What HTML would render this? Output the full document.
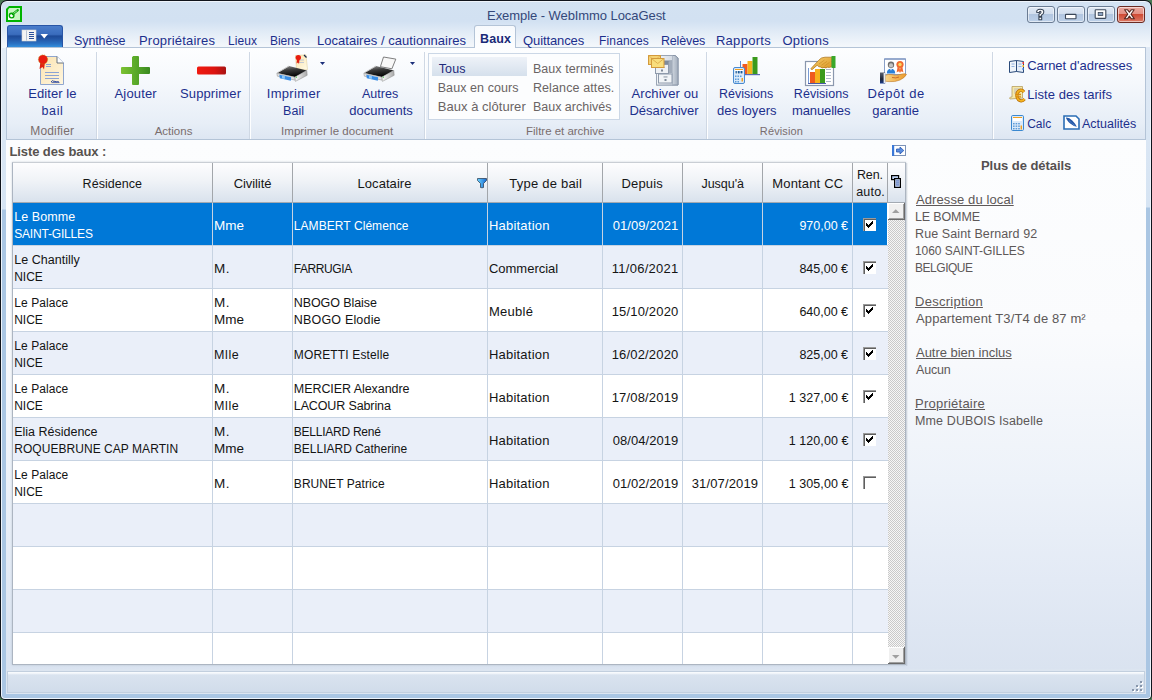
<!DOCTYPE html>
<html><head><meta charset="utf-8">
<style>
*{box-sizing:border-box;margin:0;padding:0}
html,body{width:1152px;height:700px;overflow:hidden;background:#4b7a55}
body{font-family:"Liberation Sans",sans-serif;font-size:12px;position:relative}
.a{position:absolute}
.t{position:absolute;white-space:nowrap;line-height:20px}
svg{position:absolute;overflow:visible}
.sep{position:absolute;top:52px;width:2px;height:87px;border-left:1px solid #cfd8e4;border-right:1px solid #fdfeff}
.wb{position:absolute;top:6px;height:17px;border:1px solid #6a7c93;border-radius:3px;background:linear-gradient(#dfe8f4 0,#d3dfee 45%,#b2c6e0 50%,#bdd1e9 100%);box-shadow:inset 0 0 0 1px rgba(255,255,255,.55)}
.hs{position:absolute;top:163px;width:1px;height:39px;background:#a2a6ab}
.vl{position:absolute;top:203px;width:1px;height:461px;background:#c7d3e2}
.hl{position:absolute;left:13px;width:875px;height:1px;background:#c7d3e2}
.rowb{position:absolute;left:13px;width:875px;height:42px;background:#eaeff9}
.cb{position:absolute;left:863px;width:13px;height:13px;background:#fff;border-top:1px solid #9a9a9a;border-left:1px solid #9a9a9a;box-shadow:inset 1px 1px 0 #5f5f5f}
</style></head><body>
<!-- window frame -->
<div class="a" style="left:0;top:0;width:1152px;height:700px;border-radius:7px 7px 5px 5px;background:#10141c"></div>
<div class="a" style="left:1px;top:1px;width:1150px;height:698px;border-radius:6px 6px 4px 4px;background:#eef4fb"></div>
<div class="a" style="left:2px;top:2px;width:1148px;height:696px;border-radius:5px 5px 3px 3px;background:linear-gradient(#d3e2f2 0,#e2ecf6 45px,#dae7f4 120px,#d6e4f3 207px,#aac6e3 208px)"></div>
<div class="a" style="left:2px;top:2px;width:1148px;height:46px;border-radius:4px 4px 0 0;background:linear-gradient(#d3e2f2 0px,#d2e1f2 19px,#e4edf7 32px,#f3f7fb 44px)"></div>
<div class="a" style="left:1146px;top:47px;width:4px;height:650px;background:linear-gradient(#dfe9f5 0,#d6e4f3 160px,#aac6e3 161px)"></div>

<!-- window icon -->
<svg style="left:6px;top:6px" width="16" height="16" viewBox="0 0 16 16">
<path d="M3 0 H16 V16 H0 V3 Z" fill="#00b400"/>
<path d="M3.5 2 H14 V14 H2 V3.5 Z" fill="#c8f6c2"/>
<path d="M2 8 L2 14 L8 14 Z" fill="#fff" opacity=".8"/>
<circle cx="5.6" cy="9.6" r="2.3" fill="#fff" stroke="#00a400" stroke-width="1.4"/>
<path d="M6.8 8.2 L11.8 4.2" stroke="#00a400" stroke-width="2.2" stroke-linecap="round"/>
<path d="M7.6 7.4 L11.2 4.6" stroke="#e8ffe8" stroke-width=".7"/>
</svg>

<!-- window buttons -->
<div class="wb" style="left:1027px;width:28px"></div>
<div class="wb" style="left:1057px;width:28px"></div>
<div class="wb" style="left:1087px;width:28px"></div>
<div class="wb" style="left:1117px;width:28px;border-color:#6b2a22;background:linear-gradient(#eaa89e 0,#e39084 45%,#cf4b35 50%,#dc7a66 100%)"></div>
<svg style="left:1027px;top:6px" width="118" height="17" viewBox="0 0 118 17">
<g stroke="#3b4758" stroke-width="1.1" fill="#fff" stroke-linejoin="round">
<path d="M9.6 6.3 Q9.6 3.3 13.2 3.3 Q16.8 3.3 16.8 6 Q16.8 8 14.6 9 L14.6 10.4 L11.9 10.4 L11.9 8.2 Q14 7.4 14 6.3 Q14 5.4 13.2 5.4 Q12.4 5.4 12.3 6.6 Z"/>
<rect x="11.9" y="11.2" width="2.8" height="2.6"/>
<rect x="38.5" y="8.4" width="10.5" height="4.4" rx=".6"/>
<rect x="68.2" y="3.8" width="10.6" height="8.6" rx=".6"/>
</g>
<rect x="71.2" y="6.5" width="4.6" height="3" fill="#8aa2c2" stroke="#3b4758" stroke-width=".8"/>
<path d="M97.6 3.8 L100.6 3.8 L102.4 6.2 L104.2 3.8 L107.2 3.8 L104 8.2 L107.4 12.8 L104.4 12.8 L102.4 10.2 L100.4 12.8 L97.4 12.8 L100.8 8.2 Z" fill="#fff" stroke="#5a2a22" stroke-width="1.1" stroke-linejoin="round"/>
</svg>

<!-- app button -->
<div class="a" style="left:7px;top:25px;width:56px;height:22px;border:1px solid #2855a6;border-bottom:none;border-radius:3px 3px 0 0;background:linear-gradient(#4a7dcb 0,#3a6cbd 40%,#1d4a98 48%,#2456a5 62%,#2b73c4 85%,#3590dc 100%)"></div>
<svg style="left:22px;top:30px" width="27" height="11" viewBox="0 0 27 11">
<rect x="0" y="0" width="14" height="11" fill="#f4f4f4" stroke="#d6d6d6" stroke-width=".6"/>
<rect x="4" y="0.5" width="1" height="10" fill="#b8c4d4"/>
<rect x="7" y="2" width="5" height="1" fill="#2a4f9a"/><rect x="7" y="4" width="5" height="1" fill="#2a4f9a"/>
<rect x="7" y="6" width="5" height="1" fill="#2a4f9a"/><rect x="7" y="8" width="5" height="1" fill="#2a4f9a"/>
<path d="M18.5 4 L26 4 L22.25 8.5 Z" fill="#fff"/>
</svg>

<!-- ribbon -->
<div class="a" style="left:6px;top:47px;width:1140px;height:93px;border:1px solid #b4c4d7;background:linear-gradient(#fdfeff 0px,#f5f8fc 35px,#e7eef7 75px,#dde6f2 92px)"></div>
<!-- active tab -->
<div class="a" style="left:474px;top:25px;width:42px;height:23px;border:1px solid #b4c4d7;border-bottom:none;border-radius:3px 3px 0 0;background:linear-gradient(#f7fafd,#fdfeff)"></div>
<div class="sep" style="left:96px"></div>
<div class="sep" style="left:249px"></div>
<div class="sep" style="left:424px"></div>
<div class="sep" style="left:706px"></div>
<div class="sep" style="left:992px"></div>
<!-- filter box -->
<div class="a" style="left:428px;top:53px;width:192px;height:67px;border:1px solid #cbd7e6;background:#fcfdfe"></div>
<div class="a" style="left:432px;top:57px;width:95px;height:19px;background:linear-gradient(#eef2f8,#d5e0ec)"></div>

<!-- Editer le bail: certificate -->
<svg style="left:40px;top:55px" width="25" height="30" viewBox="0 0 25 30">
<defs><linearGradient id="gdoc" x1="0" y1="0" x2="1" y2="1"><stop offset="0" stop-color="#fbe3b0"/><stop offset="1" stop-color="#fff6df"/></linearGradient></defs>
<path d="M0.5 1.5 L17 1.5 L23.5 8 L23.5 29.5 L0.5 29.5 Z" fill="url(#gdoc)" stroke="#8fa6cf" stroke-width="1"/>
<path d="M17 1.5 L17 8 L23.5 8" fill="#fff" stroke="#5a6472" stroke-width=".9"/>
<g stroke="#8ca4d4" stroke-width="1"><path d="M6 9.5 H11"/><path d="M6 11.5 H11"/><path d="M5 17.5 H19"/><path d="M5 20.5 H19"/><path d="M5 23.5 H19"/></g>
<path d="M11 27 Q12.5 24.5 14 26.5 Q15 25.5 16 27 Q17 26 19 27" stroke="#2f4aa0" stroke-width="1" fill="none"/>
<path d="M11.5 27.6 H19.5" stroke="#2f4aa0" stroke-width=".8"/>
<path d="M0.5 7 L-0.5 14 L2.5 12 L4 14.5 L5 7 Z" fill="#e02010"/>
<circle cx="3" cy="4.5" r="4.6" fill="#e81c10"/>
<circle cx="3" cy="4.5" r="4.6" fill="none" stroke="#b8860b" stroke-width=".8" stroke-dasharray="1 1.2"/>
</svg>
<!-- Ajouter: plus -->
<svg style="left:121px;top:56px" width="30" height="30" viewBox="0 0 30 30">
<defs><linearGradient id="gplus" x1="0" y1="0" x2="1" y2="0"><stop offset="0" stop-color="#7cc232"/><stop offset=".5" stop-color="#5aaa2a"/><stop offset="1" stop-color="#3a8a20"/></linearGradient></defs>
<path d="M12 0.8 Q11 0 12 0 L17 0 Q18 0 18 1 L18 11 L28 11 Q29 11 29 12 L29 17 Q29 18 28 18 L18 18 L18 28 Q18 29 17 29 L12 29 Q11 29 11 28 L11 18 L1 18 Q0 18 0 17 L0 12 Q0 11 1 11 L11 11 L11 1 Z" fill="url(#gplus)"/>
</svg>
<!-- Supprimer: minus -->
<svg style="left:197px;top:66px" width="30" height="9" viewBox="0 0 30 9">
<defs><linearGradient id="gmin" x1="0" y1="0" x2="1" y2="0"><stop offset="0" stop-color="#f01a10"/><stop offset=".6" stop-color="#dc1410"/><stop offset="1" stop-color="#a81212"/></linearGradient></defs>
<rect x="0" y="0.5" width="29" height="8" rx="1.5" fill="url(#gmin)"/>
</svg>
<!-- printer 1 -->
<svg style="left:276px;top:54px" width="50" height="28" viewBox="0 0 50 28">
<defs>
<linearGradient id="gpt" x1="0" y1="0" x2="0.3" y2="1"><stop offset="0" stop-color="#9a9a9a"/><stop offset=".45" stop-color="#3a3a3a"/><stop offset="1" stop-color="#050505"/></linearGradient>
<linearGradient id="gps" x1="0" y1="0" x2="1" y2="0"><stop offset="0" stop-color="#fafafa"/><stop offset="1" stop-color="#a8a8a8"/></linearGradient>
<linearGradient id="gcert" x1="0" y1="0" x2="1" y2="1"><stop offset="0" stop-color="#fbe2a8"/><stop offset="1" stop-color="#fffbe8"/></linearGradient>
</defs>
<path d="M19.5 1.5 L30 0.8 L31.5 15.5 L20.5 16 Z" fill="url(#gcert)" stroke="#e0d0a0" stroke-width=".6"/>
<path d="M28 1 L30.5 3.5" stroke="#1a2a4a" stroke-width="1.2"/>
<path d="M23 6 H28 M23 8.5 H28" stroke="#a8b8d8" stroke-width=".7"/>
<path d="M21 5 L20.5 9.5 L22 8.5 L23 10 L23.5 5.5 Z" fill="#e02010"/>
<circle cx="22.3" cy="3.6" r="2.7" fill="#e81c10"/>
<path d="M1.2 18.9 L13 12 L30.8 16.4 L19 23 Z" fill="url(#gpt)"/>
<path d="M1.2 18.9 L13 12" stroke="#c8c8c8" stroke-width="1"/>
<path d="M0.8 19.3 L19 23.2 L19.3 26.2 L1.4 22.2 Z" fill="#e2e2e2" stroke="#8a8a8a" stroke-width=".5"/>
<path d="M3.3 20.8 L15.2 23.3 L14.8 26.8 L3.8 24.2 Z" fill="#3a8ee6"/>
<path d="M6 21.6 L9 22.3 L8.7 25 L6 24.4 Z" fill="#8ec8f8"/>
<path d="M19 23 L30.8 16.4 L31.2 21.3 L19.4 27.4 Z" fill="url(#gps)" stroke="#8a8a8a" stroke-width=".5"/>
<rect x="19.8" y="22.6" width="1.2" height="1.2" fill="#5ac85a"/>
<path d="M44 8 L49 8 L46.5 11 Z" fill="#1b2f7a"/>
</svg>
<!-- printer 2 -->
<svg style="left:363px;top:54px" width="53" height="28" viewBox="0 0 53 28">
<path d="M20.5 3 L32.8 5.1 L28.9 14.8 L17.4 12.7 Z" fill="#f8f8f8" stroke="#707070" stroke-width=".9"/>
<path d="M1.2 18.9 L13 12 L30.8 16.4 L19 23 Z" fill="url(#gpt)"/>
<path d="M1.2 18.9 L13 12" stroke="#c8c8c8" stroke-width="1"/>
<path d="M0.8 19.3 L19 23.2 L19.3 26.2 L1.4 22.2 Z" fill="#e2e2e2" stroke="#8a8a8a" stroke-width=".5"/>
<path d="M3.3 20.8 L15.2 23.3 L14.8 26.8 L3.8 24.2 Z" fill="#3a8ee6"/>
<path d="M6 21.6 L9 22.3 L8.7 25 L6 24.4 Z" fill="#8ec8f8"/>
<path d="M19 23 L30.8 16.4 L31.2 21.3 L19.4 27.4 Z" fill="url(#gps)" stroke="#8a8a8a" stroke-width=".5"/>
<rect x="19.8" y="22.6" width="1.2" height="1.2" fill="#5ac85a"/>
<path d="M47 8 L52 8 L49.5 11 Z" fill="#1b2f7a"/>
</svg>
<!-- archive -->
<svg style="left:648px;top:55px" width="31" height="31" viewBox="0 0 31 31">
<defs><linearGradient id="gcabf" x1="0" y1="0" x2="1" y2="0"><stop offset="0" stop-color="#f4f6f9"/><stop offset="1" stop-color="#d4dae3"/></linearGradient>
<linearGradient id="gcabs" x1="0" y1="0" x2="1" y2="0"><stop offset="0" stop-color="#ccd3dc"/><stop offset="1" stop-color="#a3aebd"/></linearGradient></defs>
<path d="M8.5 0.5 L27 0.5 L30 3 L30 30 L8.5 30 Z" fill="url(#gcabs)" stroke="#8a96a8" stroke-width="1"/>
<rect x="8.5" y="0.5" width="16" height="29.5" fill="url(#gcabf)" stroke="#9aa5b5" stroke-width="1"/>
<path d="M24.5 0.5 L27 0.5 L30 3 L30 30 L24.5 30" fill="url(#gcabs)" stroke="#8a96a8" stroke-width="1"/>
<rect x="16" y="5.5" width="8" height="5" fill="#7f8b9c"/>
<rect x="10.5" y="19" width="13.5" height="9" fill="#f1f4f7" stroke="#8e9aab" stroke-width="1"/>
<rect x="15.5" y="21.5" width="4" height=".9" fill="#7d8898"/><rect x="16.5" y="24" width="2" height="2" fill="#7d8898"/>
<path d="M20.6 6.5 L24 5.5 L24 18 L20.6 18.5 Z" fill="#a3adbb"/>
<rect x="7.5" y="9.5" width="13" height="9" fill="#eef1f5" stroke="#8e9aab" stroke-width="1"/>
<rect x="11.5" y="12" width="5" height=".9" fill="#7d8898"/><rect x="13" y="14.5" width="2" height="2" fill="#7d8898"/>
<rect x="0.5" y="0.5" width="12" height="9" fill="#f5d274" stroke="#d39a3c" stroke-width="1"/>
<path d="M0.5 0.5 L6.5 5.5 L12.5 0.5" fill="none" stroke="#e0b050" stroke-width=".7"/>
<rect x="3.5" y="3.5" width="12.5" height="9" fill="#f9de7c" stroke="#d39a3c" stroke-width="1"/>
<path d="M3.5 3.5 L9.75 8.5 L16 3.5" fill="none" stroke="#d9a444" stroke-width=".8"/>
</svg>
<!-- revisions des loyers -->
<svg style="left:733px;top:56px" width="27" height="28" viewBox="0 0 27 28">
<rect x="9.5" y="8" width="5" height="10" fill="#f05a1e"/>
<rect x="14.5" y="5" width="5" height="13" fill="#f6b21c"/>
<rect x="19.5" y="1" width="5" height="17" fill="#3a9a1c"/>
<rect x="9" y="18" width="18" height="1.2" fill="#5a6ab0"/>
<rect x="7" y="5" width="1" height="7" fill="#5a8ad0"/>
<rect x="0.5" y="11.5" width="11" height="16" rx="1.5" fill="#dbeafa" stroke="#4a8ad0" stroke-width="1"/>
<rect x="2" y="13" width="8" height="5" fill="#fff"/>
<rect x="2" y="13" width="8" height="1" fill="#f0a020"/>
<g fill="#1a5a9a"><rect x="2.5" y="15" width="1.3" height="2.5"/><rect x="4.7" y="15" width="2" height="2.5"/><rect x="7.5" y="15" width="2" height="2.5"/></g>
<g fill="#5a9ad8"><rect x="2" y="19.5" width="1.5" height="1.5"/><rect x="4.5" y="19.5" width="1.5" height="1.5"/><rect x="7" y="19.5" width="1.5" height="1.5"/>
<rect x="2" y="22.5" width="1.5" height="1.5"/><rect x="4.5" y="22.5" width="1.5" height="1.5"/><rect x="2" y="25" width="1.5" height="1.5"/><rect x="4.5" y="25" width="1.5" height="1.5"/></g>
<rect x="8.5" y="22" width="1.5" height="3.5" fill="#f0a020"/>
</svg>
<!-- revisions manuelles -->
<svg style="left:805px;top:56px" width="31" height="30" viewBox="0 0 31 30">
<rect x="0.5" y="5.5" width="28" height="24" fill="#fff" stroke="#8a97ad" stroke-width="1.2"/>
<rect x="3" y="12" width="0.9" height="15" fill="#6a90d0"/>
<rect x="5" y="16" width="5" height="11" fill="#f05a1e"/>
<rect x="10" y="13" width="5" height="14" fill="#f6b21c"/>
<rect x="15" y="13" width="5" height="14" fill="#3a9a1c"/>
<rect x="3" y="27" width="18" height="1" fill="#4a5aa8"/>
<g fill="#9aa8bd"><rect x="21" y="13" width="5" height=".8"/><rect x="21" y="16" width="5" height=".8"/><rect x="21" y="19" width="5" height=".8"/><rect x="21" y="22" width="5" height=".8"/><rect x="21" y="25" width="5" height=".8"/></g>
<defs><linearGradient id="ghand2" x1="0" y1="0" x2="1" y2="1"><stop offset="0" stop-color="#f8d070"/><stop offset="1" stop-color="#d89420"/></linearGradient></defs>
<path d="M6 12.5 L13.5 4.5 Q16 1.2 20 1.2 L26.8 1.2 L26.8 10.5 Q24.5 12.2 22.5 11.2 Q21 12.6 19 11.4 Q17.2 12.6 15.5 11 Q13.2 11.2 12.2 9.2 L7.4 13.4 Q5.8 13.8 6 12.5 Z" fill="url(#ghand2)" stroke="#a87018" stroke-width=".7"/>
<path d="M14 8 L19.5 4 M16.5 9.2 L22 5.4 M19.5 10 L24.5 6.4" stroke="#c88a20" stroke-width=".6"/>
<rect x="26.5" y="0" width="4" height="12" fill="#3aa82a"/>
</svg>
<!-- depot de garantie -->
<svg style="left:880px;top:58px" width="27" height="26" viewBox="0 0 27 26">
<defs><linearGradient id="ghand" x1="0" y1="0" x2="1" y2="0"><stop offset="0" stop-color="#f8d68a"/><stop offset=".6" stop-color="#f2b04a"/><stop offset="1" stop-color="#e89a30"/></linearGradient>
<linearGradient id="gcuff" x1="0" y1="0" x2="0" y2="1"><stop offset="0" stop-color="#5a6270"/><stop offset=".6" stop-color="#1e2638"/><stop offset="1" stop-color="#1a3a8a"/></linearGradient></defs>
<rect x="4.5" y="1" width="21" height="15.5" fill="#fff" stroke="#8aa0c8" stroke-width="1"/>
<path d="M4.5 1 H25.5" stroke="#6a86b8" stroke-width="1"/>
<circle cx="11" cy="6.8" r="3.2" fill="#6e6e6e"/>
<circle cx="11" cy="7.4" r="2.1" fill="#c4c4c4"/>
<path d="M6.8 15.5 Q6.8 10.8 11 10.8 Q15.2 10.8 15.2 15.5 Z" fill="#2a80d8"/>
<path d="M10.2 11 L11 12.8 L11.8 11 Z" fill="#fff"/>
<path d="M17.6 9 L16.6 14.5 L18.4 13.2 L19.6 14.8 L20.4 9.8 Z M22.4 9 L23.4 14.5 L21.6 13.2 L20.4 14.8 L19.6 9.8 Z" fill="#f06a30"/>
<circle cx="20" cy="6.5" r="3.6" fill="#f26a2e"/>
<circle cx="20" cy="6.5" r="1.7" fill="#f8d860"/>
<path d="M5 17.5 Q8 15.8 12 16.6 L16 17.2 Q19 16.8 22 16 Q25.5 15.2 26.5 16.4 Q25 19.5 20 22 Q15 24.2 9 23.6 L5 23.2 Z" fill="url(#ghand)" stroke="#c07a28" stroke-width=".6"/>
<path d="M12 19.5 Q16 20.5 19 19" stroke="#c05a20" stroke-width=".8" fill="none"/>
<rect x="0" y="14.5" width="5.2" height="11" fill="url(#gcuff)"/>
<rect x="3.6" y="15" width="1.8" height="10" fill="#e6eaf0"/>
</svg>
<!-- carnet d'adresses -->
<svg style="left:1009px;top:60px" width="16" height="13" viewBox="0 0 16 13">
<path d="M0.5 1.5 L7.5 0.5 L7.5 11.5 L0.5 12.5 Z" fill="#eef4fb" stroke="#2a4a7a" stroke-width="1"/>
<path d="M7.5 0.5 L14.5 1.5 L14.5 12.5 L7.5 11.5 Z" fill="#e6eef8" stroke="#2a4a7a" stroke-width="1"/>
<g stroke="#7aa0d8" stroke-width=".8"><path d="M2.5 4 H5.5"/><path d="M2.5 6.5 H5.5"/><path d="M9.5 4 H12.5"/><path d="M9.5 6.5 H12.5"/></g>
<rect x="13.5" y="2" width="1.5" height="2" fill="#e83030"/><rect x="13.5" y="5" width="1.5" height="2" fill="#f0b020"/><rect x="13.5" y="8" width="1.5" height="2" fill="#3070d0"/>
</svg>
<!-- liste des tarifs -->
<svg style="left:1009px;top:86px" width="16" height="16" viewBox="0 0 16 16">
<path d="M3 0.5 L13.5 0.5 L13.5 12 L1 13 Q0 12 1.5 11 L3 11 Z" fill="#f5e8a8" stroke="#b8a060" stroke-width=".8"/>
<g stroke="#a8a8c8" stroke-width=".7"><path d="M5 3 H12"/><path d="M5 5 H8"/><path d="M5 7 H8"/></g>
<path d="M15 6 Q13 3.5 10.5 4.5 Q7.5 6 8 10 Q8.5 14.5 12 14.8 Q14 15 15.5 13" fill="none" stroke="#b87008" stroke-width="3.2"/><path d="M15 6 Q13 3.5 10.5 4.5 Q7.5 6 8 10 Q8.5 14.5 12 14.8 Q14 15 15.5 13" fill="none" stroke="#f6b420" stroke-width="1.8"/>
<path d="M6.5 8.5 H12 M6.5 10.8 H12" stroke="#d88a10" stroke-width="1.3"/>
</svg>
<!-- calc -->
<svg style="left:1011px;top:115px" width="13" height="16" viewBox="0 0 13 16">
<rect x="0.5" y="0.5" width="12" height="15" rx="1.2" fill="#dbeafa" stroke="#3a88d0" stroke-width="1"/>
<rect x="2" y="2" width="9" height="4" fill="#fff"/><rect x="2" y="2" width="9" height="1" fill="#f0a020"/>
<g fill="#5a9ad8"><rect x="2" y="8" width="1.6" height="1.4"/><rect x="4.6" y="8" width="1.6" height="1.4"/><rect x="7.2" y="8" width="1.6" height="1.4"/>
<rect x="2" y="10.5" width="1.6" height="1.4"/><rect x="4.6" y="10.5" width="1.6" height="1.4"/><rect x="7.2" y="10.5" width="1.6" height="1.4"/>
<rect x="2" y="13" width="1.6" height="1.4"/><rect x="4.6" y="13" width="1.6" height="1.4"/><rect x="7.2" y="13" width="1.6" height="1.4"/></g>
<rect x="9.6" y="10.5" width="1.4" height="4" fill="#f0a020"/>
</svg>
<!-- actualites -->
<svg style="left:1063px;top:115px" width="17" height="15" viewBox="0 0 17 15">
<path d="M1 1 L13 1 L16 4 L16 14 L1 14 Z" fill="#fff" stroke="#2a6db5" stroke-width="1.6"/>
<path d="M3 2.5 Q6 2.2 9.5 5.8 Q12.8 9.2 13.8 11.8 Q11 11.8 7.2 8.6 Q3.4 5.2 3 2.5 Z" fill="#2458a8"/><path d="M6 5.5 L12.5 11.2" stroke="#8ab4e8" stroke-width=".6" stroke-dasharray="1 .8"/>
</svg>


<!-- content -->
<div class="a" style="left:6px;top:140px;width:1140px;height:530px;background:linear-gradient(#fcfdfe 0px,#fafbfd 190px,#edf2f9 340px,#e3eaf5 440px,#dae3f0 530px)"></div>
<div class="a" style="left:906px;top:163px;width:2px;height:503px;background:linear-gradient(90deg,rgba(150,160,175,.35),rgba(150,160,175,0))"></div>

<!-- table -->
<div class="a" style="left:12px;top:162px;width:894px;height:503px;border:1px solid #acb5c1;border-top-color:#c9ced4;background:#fff;box-shadow:0 0 2px rgba(110,125,145,.35)"></div>
<div class="a" style="left:13px;top:163px;width:892px;height:39px;background:linear-gradient(#fdfdfe 0,#f0f3f7 45%,#d9e2ed 100%)"></div>
<div class="a" style="left:13px;top:202px;width:892px;height:1px;background:#a3aab2"></div>
<div class="hs" style="left:212px"></div><div class="hs" style="left:292px"></div><div class="hs" style="left:487px"></div>
<div class="hs" style="left:602px"></div><div class="hs" style="left:682px"></div><div class="hs" style="left:762px"></div>
<div class="hs" style="left:852px"></div><div class="hs" style="left:887px"></div>
<!-- row backgrounds -->
<div class="rowb" style="top:246px"></div>
<div class="rowb" style="top:332px"></div>
<div class="rowb" style="top:418px"></div>
<div class="rowb" style="top:504px"></div>
<div class="rowb" style="top:590px"></div>
<div class="a" style="left:13px;top:203px;width:874px;height:42px;background:#0078d7"></div>
<div class="hl" style="top:245px"></div><div class="hl" style="top:288px"></div><div class="hl" style="top:331px"></div>
<div class="hl" style="top:374px"></div><div class="hl" style="top:417px"></div><div class="hl" style="top:460px"></div>
<div class="hl" style="top:503px"></div><div class="hl" style="top:546px"></div><div class="hl" style="top:589px"></div>
<div class="hl" style="top:632px"></div>
<div class="vl" style="left:212px"></div><div class="vl" style="left:292px"></div><div class="vl" style="left:487px"></div>
<div class="vl" style="left:602px"></div><div class="vl" style="left:682px"></div><div class="vl" style="left:762px"></div>
<div class="vl" style="left:852px"></div>
<!-- checkboxes -->
<div class="cb" style="top:218px"></div><div class="cb" style="top:261px"></div><div class="cb" style="top:304px"></div>
<div class="cb" style="top:347px"></div><div class="cb" style="top:390px"></div><div class="cb" style="top:433px"></div>
<div class="cb" style="top:476px;background:transparent"></div>
<svg style="left:863px;top:218px" width="13" height="230" viewBox="0 0 13 230" shape-rendering="crispEdges"><path d="M9 3h1v1h-1z M8 4h2v1h-2z M3 5h1v1h-1z M7 5h3v1h-3z M3 6h2v1h-2z M6 6h3v1h-3z M3 7h5v1h-5z M4 8h3v1h-3z M5 9h1v1h-1z" transform="translate(0,0)" fill="#000"/><path d="M9 3h1v1h-1z M8 4h2v1h-2z M3 5h1v1h-1z M7 5h3v1h-3z M3 6h2v1h-2z M6 6h3v1h-3z M3 7h5v1h-5z M4 8h3v1h-3z M5 9h1v1h-1z" transform="translate(0,43)" fill="#000"/><path d="M9 3h1v1h-1z M8 4h2v1h-2z M3 5h1v1h-1z M7 5h3v1h-3z M3 6h2v1h-2z M6 6h3v1h-3z M3 7h5v1h-5z M4 8h3v1h-3z M5 9h1v1h-1z" transform="translate(0,86)" fill="#000"/><path d="M9 3h1v1h-1z M8 4h2v1h-2z M3 5h1v1h-1z M7 5h3v1h-3z M3 6h2v1h-2z M6 6h3v1h-3z M3 7h5v1h-5z M4 8h3v1h-3z M5 9h1v1h-1z" transform="translate(0,129)" fill="#000"/><path d="M9 3h1v1h-1z M8 4h2v1h-2z M3 5h1v1h-1z M7 5h3v1h-3z M3 6h2v1h-2z M6 6h3v1h-3z M3 7h5v1h-5z M4 8h3v1h-3z M5 9h1v1h-1z" transform="translate(0,172)" fill="#000"/><path d="M9 3h1v1h-1z M8 4h2v1h-2z M3 5h1v1h-1z M7 5h3v1h-3z M3 6h2v1h-2z M6 6h3v1h-3z M3 7h5v1h-5z M4 8h3v1h-3z M5 9h1v1h-1z" transform="translate(0,215)" fill="#000"/></svg>
<!-- scrollbar -->
<div class="a" style="left:888px;top:203px;width:17px;height:461px;background-color:#fff;background-image:repeating-conic-gradient(#c9c9c9 0 25%,#f6f6f6 0 50%);background-size:2px 2px"></div>
<div class="a" style="left:888px;top:203px;width:17px;height:17px;background:#f0f0f0;border-right:1px solid #6a6a6a;border-bottom:1px solid #6a6a6a;box-shadow:inset 1px 1px 0 #fff,inset -1px -1px 0 #a0a0a0"></div>
<div class="a" style="left:888px;top:647px;width:17px;height:17px;background:#f0f0f0;border-right:1px solid #6a6a6a;border-bottom:1px solid #6a6a6a;box-shadow:inset 1px 1px 0 #fff,inset -1px -1px 0 #a0a0a0"></div>
<svg style="left:888px;top:203px" width="17" height="461" viewBox="0 0 17 461">
<path d="M4 10 L11.5 10 L7.75 6.2 Z" fill="#a0a0a0"/>
<path d="M4 452 L11.5 452 L7.75 455.8 Z" fill="#a0a0a0"/>
</svg>

<!-- filter icon -->
<svg style="left:477px;top:178px" width="10" height="10" viewBox="0 0 10 10">
<defs><linearGradient id="gfil" x1="0" y1="0" x2="1" y2="0"><stop offset="0" stop-color="#6ad2ff"/><stop offset="1" stop-color="#1a6ad0"/></linearGradient></defs>
<path d="M0.5 0.5 L9.5 0.5 L9.5 2.5 L6.5 5.5 L6.5 9.5 L5 9.8 L3.5 9.5 L3.5 5.5 L0.5 2.5 Z" fill="url(#gfil)" stroke="#23344a" stroke-width=".7"/>
</svg>
<!-- column chooser icon -->
<svg style="left:891px;top:175px" width="10" height="13" viewBox="0 0 10 13">
<rect x="0.6" y="0.6" width="7" height="4" fill="#bcd0f0" stroke="#000" stroke-width="1.2"/>
<rect x="3.6" y="3.6" width="5.8" height="8.8" fill="#c8d8f6" stroke="#000" stroke-width="1.2"/>
<g fill="#3a5aa8"><rect x="5" y="5.5" width="3" height=".9"/><rect x="5" y="7.5" width="3" height=".9"/><rect x="5" y="9.5" width="3" height=".9"/></g>
</svg>
<!-- arrow icon -->
<svg style="left:892px;top:145px" width="14" height="11" viewBox="0 0 14 11">
<rect x="0.5" y="0.5" width="13" height="10" fill="#fff" stroke="#7c93b8" stroke-width="1"/>
<rect x="0" y="0" width="2.2" height="11" fill="#3a78d8"/>
<path d="M4.5 4 L8 4 L8 2 L11.8 5.5 L8 9 L8 7 L4.5 7 Z" fill="#5a8ee0" stroke="#2a58b0" stroke-width=".8"/>
</svg>
<!-- status bar -->
<div class="a" style="left:6px;top:669px;width:1140px;height:25px;background:#dce5f0"></div>
<div class="a" style="left:7px;top:671px;width:1138px;height:22px;border:1px solid #c2cfde;background:linear-gradient(#f7fafd 0,#f7fafd 1px,#d9e3ef 3px,#d1dcea 100%)"></div>
<svg style="left:1130px;top:680px" width="14" height="13" viewBox="0 0 14 13" shape-rendering="crispEdges">
<g fill="#fff"><rect x="11" y="2" width="2" height="2"/><rect x="7" y="6" width="2" height="2"/><rect x="11" y="6" width="2" height="2"/><rect x="3" y="10" width="2" height="2"/><rect x="7" y="10" width="2" height="2"/><rect x="11" y="10" width="2" height="2"/></g>
<g fill="#8796ab"><rect x="10" y="1" width="2" height="2"/><rect x="6" y="5" width="2" height="2"/><rect x="10" y="5" width="2" height="2"/><rect x="2" y="9" width="2" height="2"/><rect x="6" y="9" width="2" height="2"/><rect x="10" y="9" width="2" height="2"/></g>
</svg>

<div class="t" style="left:487.10px;top:6px;color:#34487a;font-size:13px;letter-spacing:-0.072px">Exemple - WebImmo LocaGest</div>
<div class="t" style="left:74.00px;top:31px;color:#1c2f8c;font-size:12.5px;letter-spacing:-0.100px">Synthèse</div>
<div class="t" style="left:139.00px;top:31px;color:#1c2f8c;font-size:13px;letter-spacing:0.192px">Propriétaires</div>
<div class="t" style="left:227.90px;top:31px;color:#1c2f8c;letter-spacing:0.125px">Lieux</div>
<div class="t" style="left:269.90px;top:31px;color:#1c2f8c;letter-spacing:0.025px">Biens</div>
<div class="t" style="left:316.90px;top:31px;color:#1c2f8c;font-size:13px;letter-spacing:0.040px">Locataires / cautionnaires</div>
<div class="t" style="left:523.00px;top:31px;color:#1c2f8c;font-size:13px;letter-spacing:-0.100px">Quittances</div>
<div class="t" style="left:599.00px;top:31px;color:#1c2f8c;letter-spacing:0.157px">Finances</div>
<div class="t" style="left:660.90px;top:31px;color:#1c2f8c;font-size:12.5px;letter-spacing:-0.133px">Relèves</div>
<div class="t" style="left:715.90px;top:31px;color:#1c2f8c;font-size:13px;letter-spacing:0.300px">Rapports</div>
<div class="t" style="left:782.40px;top:31px;color:#1c2f8c;font-size:13px;letter-spacing:0.267px">Options</div>
<div class="t" style="left:480.00px;top:29px;color:#1a2a78;font-size:12.5px;font-weight:bold;letter-spacing:0.167px">Baux</div>
<div class="t" style="left:28.20px;top:84px;color:#1c2f8c;font-size:13px;letter-spacing:0.075px">Editer le</div>
<div class="t" style="left:41.40px;top:101px;color:#1c2f8c;font-size:12.5px;letter-spacing:0.667px">bail</div>
<div class="t" style="left:114.50px;top:84px;color:#1c2f8c;font-size:13px;letter-spacing:0.167px">Ajouter</div>
<div class="t" style="left:180.00px;top:84px;color:#1c2f8c;font-size:13px;letter-spacing:0.125px">Supprimer</div>
<div class="t" style="left:266.70px;top:84px;color:#1c2f8c;font-size:13px;letter-spacing:0.329px">Imprimer</div>
<div class="t" style="left:283.10px;top:101px;color:#1c2f8c;font-size:12.5px;letter-spacing:0.067px">Bail</div>
<div class="t" style="left:361.90px;top:84px;color:#1c2f8c;font-size:12.5px;letter-spacing:0.040px">Autres</div>
<div class="t" style="left:349.25px;top:101px;color:#1c2f8c;font-size:13px">documents</div>
<div class="t" style="left:631.50px;top:84px;color:#1c2f8c;font-size:13px;letter-spacing:0.100px">Archiver ou</div>
<div class="t" style="left:629.50px;top:101px;color:#1c2f8c;font-size:13px;letter-spacing:-0.040px">Désarchiver</div>
<div class="t" style="left:719.00px;top:84px;color:#1c2f8c;font-size:12.5px">Révisions</div>
<div class="t" style="left:716.90px;top:101px;color:#1c2f8c;font-size:13px;letter-spacing:0.044px">des loyers</div>
<div class="t" style="left:793.80px;top:84px;color:#1c2f8c;font-size:12.5px;letter-spacing:0.062px">Révisions</div>
<div class="t" style="left:791.90px;top:101px;color:#1c2f8c;font-size:13px;letter-spacing:-0.088px">manuelles</div>
<div class="t" style="left:867.50px;top:84px;color:#1c2f8c;font-size:13px;letter-spacing:0.571px">Dépôt de</div>
<div class="t" style="left:872.20px;top:101px;color:#1c2f8c;font-size:13px;letter-spacing:-0.029px">garantie</div>
<div class="t" style="left:1027.20px;top:56px;color:#1c2f8c;font-size:13px">Carnet d'adresses</div>
<div class="t" style="left:1027.20px;top:85px;color:#1c2f8c;font-size:13px;letter-spacing:0.067px">Liste des tarifs</div>
<div class="t" style="left:1027.20px;top:114px;color:#1c2f8c">Calc</div>
<div class="t" style="left:1081.90px;top:114px;color:#1c2f8c;font-size:12.5px;letter-spacing:0.022px">Actualités</div>
<div class="t" style="left:30.30px;top:121px;color:#7a6d6d;letter-spacing:0.143px">Modifier</div>
<div class="t" style="left:154.70px;top:121px;color:#7a6d6d;font-size:11.5px">Actions</div>
<div class="t" style="left:281.00px;top:121px;color:#7a6d6d;font-size:11.5px;letter-spacing:0.053px">Imprimer le document</div>
<div class="t" style="left:526.10px;top:121px;color:#7a6d6d;font-size:11.5px;letter-spacing:-0.025px">Filtre et archive</div>
<div class="t" style="left:759.80px;top:121px;color:#7a6d6d;font-size:11px;letter-spacing:0.143px">Révision</div>
<div class="t" style="left:438.70px;top:59px;color:#1e2a7a;font-size:12.5px;letter-spacing:0.167px">Tous</div>
<div class="t" style="left:437.70px;top:78px;color:#6a6464;font-size:12.5px;letter-spacing:0.083px">Baux en cours</div>
<div class="t" style="left:437.70px;top:97px;color:#6a6464;font-size:13px;letter-spacing:0.043px">Baux à clôturer</div>
<div class="t" style="left:532.90px;top:59px;color:#6a6464;font-size:12.5px;letter-spacing:0.067px">Baux terminés</div>
<div class="t" style="left:532.90px;top:78px;color:#6a6464;font-size:12.5px;letter-spacing:0.115px">Relance attes.</div>
<div class="t" style="left:532.90px;top:97px;color:#6a6464;font-size:12.5px">Baux archivés</div>
<div class="t" style="left:9.50px;top:142px;color:#57524f;font-size:13px;font-weight:bold;letter-spacing:-0.100px">Liste des baux :</div>
<div class="t" style="left:82.60px;top:174px;color:#161616;font-size:12.5px;letter-spacing:0.050px">Résidence</div>
<div class="t" style="left:233.80px;top:174px;color:#161616;font-size:13px;letter-spacing:-0.100px">Civilité</div>
<div class="t" style="left:357.50px;top:174px;color:#161616;font-size:13px;letter-spacing:0.062px">Locataire</div>
<div class="t" style="left:509.25px;top:174px;color:#161616;font-size:13px;letter-spacing:0.227px">Type de bail</div>
<div class="t" style="left:621.40px;top:174px;color:#161616;font-size:13px;letter-spacing:0.200px">Depuis</div>
<div class="t" style="left:701.50px;top:174px;color:#161616;font-size:12.5px;letter-spacing:-0.042px">Jusqu'à</div>
<div class="t" style="left:772.30px;top:174px;color:#161616;font-size:13px;letter-spacing:0.156px">Montant CC</div>
<div class="t" style="left:857.00px;top:165px;color:#161616;font-size:12.5px;letter-spacing:-0.167px">Ren.</div>
<div class="t" style="left:856.20px;top:182px;color:#161616;font-size:12.5px;letter-spacing:0.200px">auto.</div>
<div class="t" style="left:14.20px;top:207px;color:#ffffff;font-size:12.5px;letter-spacing:0.086px">Le Bomme</div>
<div class="t" style="left:14.20px;top:224px;color:#ffffff;letter-spacing:-0.182px">SAINT-GILLES</div>
<div class="t" style="left:214.00px;top:216px;color:#ffffff;font-size:13.5px">Mme</div>
<div class="t" style="left:293.80px;top:216px;color:#ffffff;letter-spacing:0.067px">LAMBERT Clémence</div>
<div class="t" style="left:488.90px;top:216px;color:#ffffff;font-size:13px;letter-spacing:0.222px">Habitation</div>
<div class="t" style="left:612.70px;top:216px;color:#ffffff;font-size:13px;letter-spacing:0.056px">01/09/2021</div>
<div class="t" style="left:799.40px;top:216px;color:#ffffff;font-size:12.5px">970,00 €</div>
<div class="t" style="left:14.20px;top:250px;color:#141414;font-size:12.5px;letter-spacing:0.027px">Le Chantilly</div>
<div class="t" style="left:14.20px;top:267px;color:#141414">NICE</div>
<div class="t" style="left:214.00px;top:259px;color:#141414;font-size:13.5px;letter-spacing:0.500px">M.</div>
<div class="t" style="left:293.80px;top:259px;color:#141414;letter-spacing:-0.429px">FARRUGIA</div>
<div class="t" style="left:488.90px;top:259px;color:#141414;font-size:13px">Commercial</div>
<div class="t" style="left:611.70px;top:259px;color:#141414;font-size:13px;letter-spacing:0.278px">11/06/2021</div>
<div class="t" style="left:799.40px;top:259px;color:#141414;font-size:12.5px">845,00 €</div>
<div class="t" style="left:14.20px;top:293px;color:#141414;letter-spacing:0.088px">Le Palace</div>
<div class="t" style="left:14.20px;top:310px;color:#141414">NICE</div>
<div class="t" style="left:214.00px;top:293px;color:#141414;font-size:13.5px;letter-spacing:0.500px">M.</div>
<div class="t" style="left:214.00px;top:310px;color:#141414;font-size:13.5px">Mme</div>
<div class="t" style="left:293.80px;top:293px;color:#141414;font-size:12.5px;letter-spacing:-0.091px">NBOGO Blaise</div>
<div class="t" style="left:293.80px;top:310px;color:#141414;font-size:12.5px;letter-spacing:0.182px">NBOGO Elodie</div>
<div class="t" style="left:488.90px;top:302px;color:#141414;font-size:13px;letter-spacing:0.300px">Meublé</div>
<div class="t" style="left:611.70px;top:302px;color:#141414;font-size:13px;letter-spacing:0.167px">15/10/2020</div>
<div class="t" style="left:799.40px;top:302px;color:#141414;font-size:12.5px">640,00 €</div>
<div class="t" style="left:14.20px;top:336px;color:#141414;letter-spacing:0.088px">Le Palace</div>
<div class="t" style="left:14.20px;top:353px;color:#141414">NICE</div>
<div class="t" style="left:214.00px;top:345px;color:#141414;font-size:12.5px;letter-spacing:0.600px">Mlle</div>
<div class="t" style="left:293.80px;top:345px;color:#141414;letter-spacing:0.143px">MORETTI Estelle</div>
<div class="t" style="left:488.90px;top:345px;color:#141414;font-size:13px;letter-spacing:0.222px">Habitation</div>
<div class="t" style="left:611.70px;top:345px;color:#141414;font-size:13px;letter-spacing:0.167px">16/02/2020</div>
<div class="t" style="left:799.40px;top:345px;color:#141414;font-size:12.5px">825,00 €</div>
<div class="t" style="left:14.20px;top:379px;color:#141414;letter-spacing:0.088px">Le Palace</div>
<div class="t" style="left:14.20px;top:396px;color:#141414">NICE</div>
<div class="t" style="left:214.00px;top:379px;color:#141414;font-size:13.5px;letter-spacing:0.500px">M.</div>
<div class="t" style="left:214.00px;top:396px;color:#141414;font-size:12.5px;letter-spacing:0.600px">Mlle</div>
<div class="t" style="left:293.80px;top:379px;color:#141414;font-size:12.5px;letter-spacing:-0.062px">MERCIER Alexandre</div>
<div class="t" style="left:293.80px;top:396px;color:#141414;font-size:12.5px;letter-spacing:-0.123px">LACOUR Sabrina</div>
<div class="t" style="left:488.90px;top:388px;color:#141414;font-size:13px;letter-spacing:0.222px">Habitation</div>
<div class="t" style="left:611.70px;top:388px;color:#141414;font-size:13px;letter-spacing:0.167px">17/08/2019</div>
<div class="t" style="left:788.70px;top:388px;color:#141414;font-size:12.5px;letter-spacing:0.078px">1 327,00 €</div>
<div class="t" style="left:14.20px;top:422px;color:#141414;font-size:12.5px">Elia Résidence</div>
<div class="t" style="left:14.20px;top:439px;color:#141414;letter-spacing:0.050px">ROQUEBRUNE CAP MARTIN</div>
<div class="t" style="left:214.00px;top:422px;color:#141414;font-size:13.5px;letter-spacing:0.500px">M.</div>
<div class="t" style="left:214.00px;top:439px;color:#141414;font-size:13.5px">Mme</div>
<div class="t" style="left:293.80px;top:422px;color:#141414;letter-spacing:-0.250px">BELLIARD René</div>
<div class="t" style="left:293.80px;top:439px;color:#141414">BELLIARD Catherine</div>
<div class="t" style="left:488.90px;top:431px;color:#141414;font-size:13px;letter-spacing:0.222px">Habitation</div>
<div class="t" style="left:612.70px;top:431px;color:#141414;font-size:13px;letter-spacing:0.056px">08/04/2019</div>
<div class="t" style="left:788.70px;top:431px;color:#141414;font-size:12.5px;letter-spacing:0.078px">1 120,00 €</div>
<div class="t" style="left:14.20px;top:465px;color:#141414;letter-spacing:0.088px">Le Palace</div>
<div class="t" style="left:14.20px;top:482px;color:#141414">NICE</div>
<div class="t" style="left:214.00px;top:474px;color:#141414;font-size:13.5px;letter-spacing:0.500px">M.</div>
<div class="t" style="left:293.80px;top:474px;color:#141414;letter-spacing:0.077px">BRUNET Patrice</div>
<div class="t" style="left:488.90px;top:474px;color:#141414;font-size:13px;letter-spacing:0.222px">Habitation</div>
<div class="t" style="left:612.70px;top:474px;color:#141414;font-size:13px;letter-spacing:0.056px">01/02/2019</div>
<div class="t" style="left:691.70px;top:474px;color:#141414;font-size:13px;letter-spacing:0.144px">31/07/2019</div>
<div class="t" style="left:788.70px;top:474px;color:#141414;font-size:12.5px;letter-spacing:0.078px">1 305,00 €</div>
<div class="t" style="left:981.00px;top:156px;color:#555050;font-size:13px;font-weight:bold;letter-spacing:-0.050px">Plus de détails</div>
<div class="t" style="left:916.00px;top:190px;color:#5d5858;font-size:13px;letter-spacing:0.100px;text-decoration:underline">Adresse du local</div>
<div class="t" style="left:915.00px;top:207px;color:#5d5858;font-size:12.5px;letter-spacing:-0.143px">LE BOMME</div>
<div class="t" style="left:915.00px;top:224px;color:#5d5858;font-size:12.5px;letter-spacing:0.105px">Rue Saint Bernard 92</div>
<div class="t" style="left:915.00px;top:241px;color:#5d5858;letter-spacing:-0.062px">1060 SAINT-GILLES</div>
<div class="t" style="left:915.00px;top:258px;color:#5d5858;letter-spacing:-0.471px">BELGIQUE</div>
<div class="t" style="left:915.00px;top:292px;color:#5d5858;font-size:13px;letter-spacing:0.260px;text-decoration:underline">Description</div>
<div class="t" style="left:916.00px;top:309px;color:#5d5858;font-size:13px;letter-spacing:0.120px">Appartement T3/T4 de 87 m²</div>
<div class="t" style="left:916.00px;top:343px;color:#5d5858;font-size:13px;letter-spacing:-0.025px;text-decoration:underline">Autre bien inclus</div>
<div class="t" style="left:916.00px;top:360px;color:#5d5858;font-size:12.5px;letter-spacing:-0.175px">Aucun</div>
<div class="t" style="left:915.00px;top:394px;color:#5d5858;font-size:13px;letter-spacing:0.236px;text-decoration:underline">Propriétaire</div>
<div class="t" style="left:915.00px;top:411px;color:#5d5858;font-size:12.5px;letter-spacing:0.122px">Mme DUBOIS Isabelle</div>
</body></html>
